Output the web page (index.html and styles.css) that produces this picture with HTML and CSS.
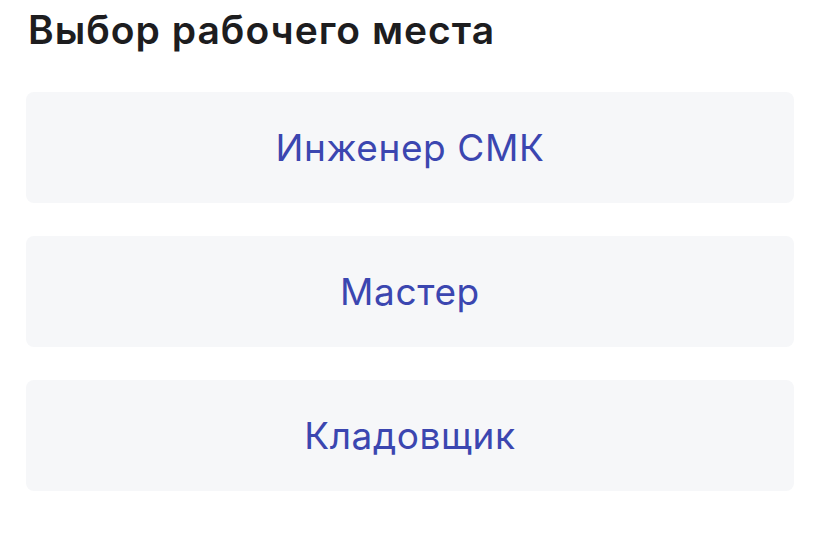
FILE: index.html
```html
<!DOCTYPE html>
<html lang="ru">
<head>
<meta charset="utf-8">
<link rel="stylesheet" href="styles.css">
</head>
<body>
<main class="page">
  <h1 class="title">Выбор рабочего места</h1>
  <div class="list">
    <button class="item">Инженер СМК</button>
    <button class="item">Мастер</button>
    <button class="item">Кладовщик</button>
  </div>
</main>
</body>
</html>
```
FILE: styles.css
```css
html, body {
  margin: 0;
  padding: 0;
  background: #ffffff;
}
.page {
  padding: 2px 24px 0 26px;
  font-family: Inter, "Noto Sans", sans-serif;
}
.title {
  margin: 0 0 0 2px;
  font-size: 39px;
  font-weight: 600;
  line-height: 56px;
  color: #1d1d1f;
  letter-spacing: 1px;
}
.list {
  margin-top: 34px;
  display: flex;
  flex-direction: column;
  gap: 33px;
}
.item {
  height: 111px;
  border: none;
  border-radius: 8px;
  background: #f6f7f9;
  color: #3b46b0;
  font-family: Inter, "Noto Sans", sans-serif;
  font-size: 37px;
  font-weight: 400;
  letter-spacing: 0.6px;
  padding: 0;
  cursor: pointer;
}
```
